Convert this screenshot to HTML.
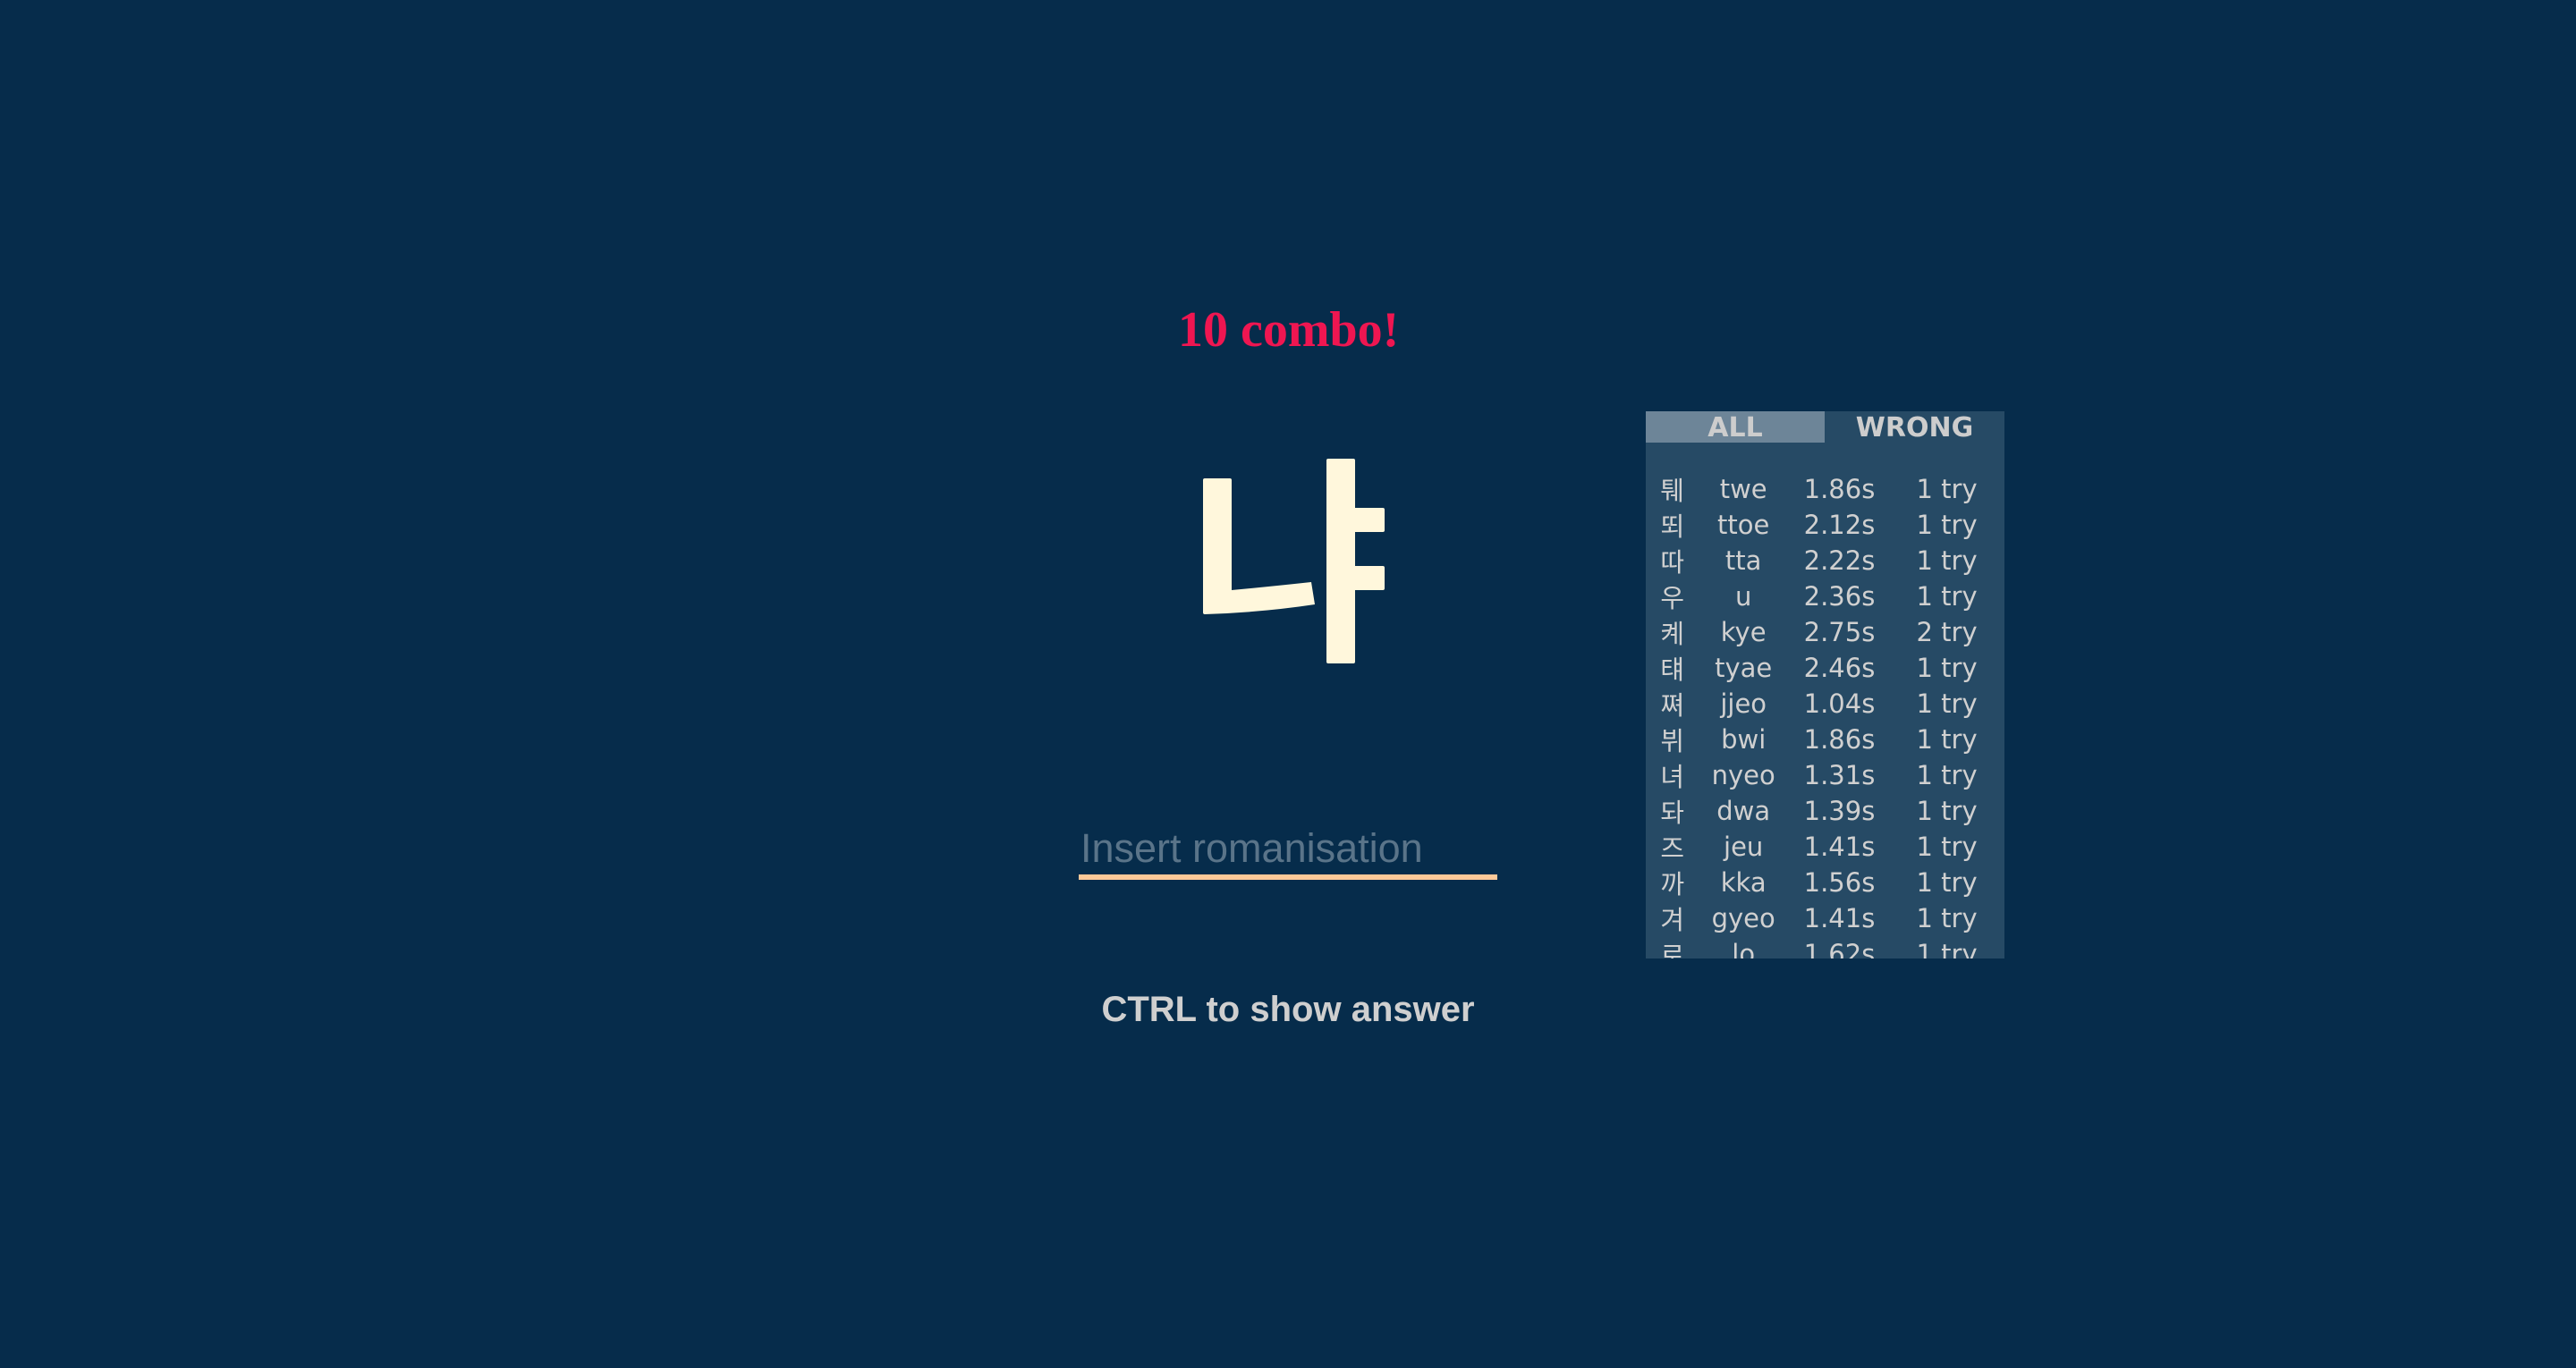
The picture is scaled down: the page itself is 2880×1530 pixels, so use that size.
<!DOCTYPE html>
<html><head><meta charset="utf-8"><style>
html,body{margin:0;padding:0;}
body{width:2880px;height:1530px;background:#062c4b;position:relative;overflow:hidden;}
.a{position:absolute;white-space:nowrap;}
#combo{left:1317px;top:329px;width:246px;text-align:center;font:bold 56px "Liberation Serif",serif;color:#ef1651;line-height:80px;}
#ph{left:1208px;top:921px;font:45px "Liberation Sans",sans-serif;color:#5a7489;line-height:56px;}
#ul{left:1206px;top:978px;width:468px;height:6px;background:#fdc999;}
#ctrl{left:1200px;top:1101px;width:480px;text-align:center;font:bold 40px "Liberation Sans",sans-serif;color:#cfcfcf;line-height:56px;}
#panel{left:1840px;top:460px;width:401px;height:612px;background:#264a65;overflow:hidden;}
.tab{position:absolute;top:0;height:35px;font:bold 30px "DejaVu Sans",sans-serif;color:#cdcdcd;text-align:center;line-height:37px;}
table{position:absolute;left:2px;top:67px;border-collapse:collapse;font:29px "DejaVu Sans","Noto Sans CJK KR",sans-serif;color:#d0d0d0;}
td{padding:0;height:40px;line-height:40px;text-align:center;}
td.k{width:58px;font-family:"Noto Sans CJK KR",sans-serif;font-size:29px;}
td.r{width:106px;} td.t{width:114px;} td.y{width:134px;}
</style></head><body>
<div class="a" id="combo">10 combo!</div>
<svg class="a" style="left:0;top:0" width="2880" height="1530">
<g fill="#fff7dc">
<path d="M1347 535 H1375 Q1377 535 1377 537 V660 Q1420 656 1466 651 L1470 676 Q1410 685 1347 687 Q1345 687 1345 685 V537 Q1345 535 1347 535Z"/>
<rect x="1483" y="513" width="32" height="229" rx="2"/>
<rect x="1513" y="568" width="35" height="27" rx="2"/>
<rect x="1513" y="633" width="35" height="27" rx="2"/>
</g>
</svg>
<div class="a" id="ph">Insert romanisation</div>
<div class="a" id="ul"></div>
<div class="a" id="ctrl">CTRL to show answer</div>
<div class="a" id="panel">
<div class="tab" style="left:0;width:200px;background:#6d8598;">ALL</div>
<div class="tab" style="left:200px;width:201px;">WRONG</div>
<table>
<tr><td class="k">퉤</td><td class="r">twe</td><td class="t">1.86s</td><td class="y">1 try</td></tr>
<tr><td class="k">뙤</td><td class="r">ttoe</td><td class="t">2.12s</td><td class="y">1 try</td></tr>
<tr><td class="k">따</td><td class="r">tta</td><td class="t">2.22s</td><td class="y">1 try</td></tr>
<tr><td class="k">우</td><td class="r">u</td><td class="t">2.36s</td><td class="y">1 try</td></tr>
<tr><td class="k">켸</td><td class="r">kye</td><td class="t">2.75s</td><td class="y">2 try</td></tr>
<tr><td class="k">턔</td><td class="r">tyae</td><td class="t">2.46s</td><td class="y">1 try</td></tr>
<tr><td class="k">쪄</td><td class="r">jjeo</td><td class="t">1.04s</td><td class="y">1 try</td></tr>
<tr><td class="k">뷔</td><td class="r">bwi</td><td class="t">1.86s</td><td class="y">1 try</td></tr>
<tr><td class="k">녀</td><td class="r">nyeo</td><td class="t">1.31s</td><td class="y">1 try</td></tr>
<tr><td class="k">돠</td><td class="r">dwa</td><td class="t">1.39s</td><td class="y">1 try</td></tr>
<tr><td class="k">즈</td><td class="r">jeu</td><td class="t">1.41s</td><td class="y">1 try</td></tr>
<tr><td class="k">까</td><td class="r">kka</td><td class="t">1.56s</td><td class="y">1 try</td></tr>
<tr><td class="k">겨</td><td class="r">gyeo</td><td class="t">1.41s</td><td class="y">1 try</td></tr>
<tr><td class="k">로</td><td class="r">lo</td><td class="t">1.62s</td><td class="y">1 try</td></tr>
</table>
</div>
</body></html>
